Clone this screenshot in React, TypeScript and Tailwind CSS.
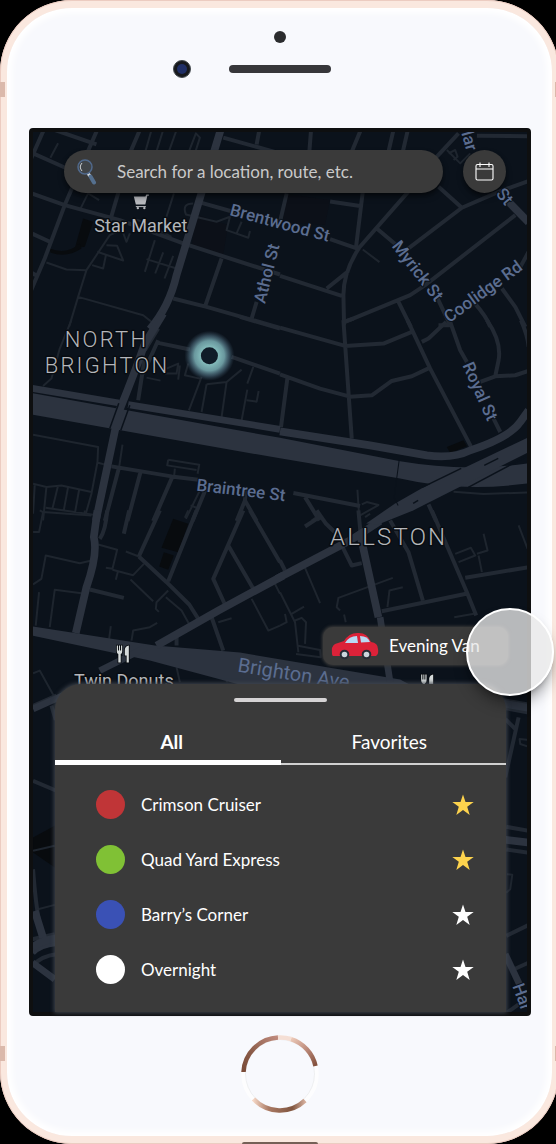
import React from "react";

type Tile = { x: number; y: number; wide: string[]; main: string[]; minor: string[]; thin: string[]; dark?: string[] };

// Roads are drawn in sheets at three times the map's scale; x and y give each sheet's origin.
const tiles: Tile[] = [
  {
    x: 30, y: 125,
    wide: ["M572 15L440 450Q418 545 360 612"],
    main: [],
    minor: [
      "M42 15L0 110", "M202 15L105 240L45 400L0 505", "M75 15L200 58", "M10 85L115 132", "M0 203L105 240L270 285L460 355L750 448",
      "M330 15L300 85L240 290", "M497 228L620 263", "M430 520L530 545L750 608", "M575 400L525 545", "M580 38L750 85", "M688 15L680 58",
      "M0 322L60 350", "M0 440L22 452", "M680 530L665 580",
    ],
    thin: [
      "M85 55L62 98", "M365 15L345 85", "M400 15L378 85", "M440 15L415 85", "M475 85L498 25L510 38L495 85", "M150 255L175 205L208 225",
      "M50 412L110 433L170 435", "M285 310L240 330L170 435L145 515L118 605", "M145 515L340 570L378 600", "M275 310L290 350L300 325",
      "M230 360L262 362L280 406L202 380M228 392L220 430L187 420", "M375 345L345 440M350 402L440 430M400 382L376 445M430 392L404 460",
      "M432 205L405 290", "M490 235Q455 235 468 268L560 290L600 275L590 315L655 338L660 318M635 290L620 325",
      "M305 280L340 290L425 335",
    ],
    dark: ["M160 280L190 290L165 365L135 370Z", "M60 370Q110 390 150 355L155 370Q110 400 62 382Z"],
  },
  {
    x: 280, y: 125,
    wide: ["M680 225L745 292"],
    main: [],
    minor: [
      "M93 15L88 80", "M242 15L215 80", "M340 15L325 80", "M383 15L368 80", "M590 32L745 34", "M535 25L470 95L380 205L237 368Q190 440 190 510L192 600",
      "M475 185L545 248", "M745 168L660 198L545 248L385 370", "M290 310L355 365", "M705 270L435 480L390 510L195 590", "M150 229L240 243",
      "M248 200L228 365", "M150 342L230 370", "M0 452L185 512", "M205 438L140 490", "M355 530L392 605", "M470 515L510 600L475 600",
      "M745 380L715 435M665 490L705 545L735 605", "M580 530Q620 575 630 605", "M20 205L0 290",
    ],
    thin: ["M248 373L298 411", "M500 75L540 115L570 85", "M505 85L525 75L532 95L520 105"],
  },
  {
    x: 30, y: 320,
    wide: ["M400 -20L345 70Q312 165 268 272L198 602"],
    main: ["M0 203L268 248M295 253L750 327"],
    minor: [
      "M385 25L345 90", "M385 68L480 88", "M345 110L325 240", "M340 160L385 60", "M605 110L750 160", "M630 -10L750 25",
      "M245 438L425 468L505 478", "M332 455L293 602", "M268 440L225 602", "M428 468L370 602", "M530 500L488 602", "M645 540L620 602M645 540L680 602M645 540L648 500",
    ],
    thin: [
      "M125 0L90 85L65 175L40 197", "M410 145L445 130L440 160L405 160M450 135L445 178M475 130L465 165L510 175", "M350 172L392 181",
      "M515 170L477 270", "M530 192L515 275M590 185L575 290M530 192L590 185L635 148", "M670 140L652 190M652 208L635 300M650 240L680 244L686 212",
      "M10 343L205 380L203 425L185 520L168 580", "M278 373L268 440M205 427L245 438", "M415 418L508 433L503 460M415 418L412 435L500 449M435 445L433 465",
      "M10 490L50 500L95 495L185 515M50 500L40 600M85 495L68 565M115 500L102 570M148 508L136 575M48 562L190 583M15 495L10 580",
      "M515 500L468 595M482 555L500 562",
    ],
  },
  {
    x: 280, y: 320,
    wide: ["M0 333L270 375L440 405Q520 415 570 390Q690 350 720 305L745 270"],
    main: [],
    minor: [
      "M190 0L215 355", "M190 5L220 -5", "M0 22L195 77L310 70L395 35", "M0 162L120 205L210 229L275 225L335 182L395 168L448 143", "M382 0L450 145L572 378",
      "M425 65L445 55L498 5", "M510 5L540 90L560 125", "M640 295L660 335", "M620 0Q665 65 655 120L645 168", "M600 185L645 168L705 165L745 152",
      "M722 0Q742 45 745 80", "M22 175L3 320", "M40 518L240 557", "M75 530L118 600", "M445 552L468 602",
    ],
    thin: ["M232 508L238 600", "M245 552L260 545L295 554L240 585", "M520 514L610 521L745 516", "M95 600L115 585"],
    dark: ["M500 380L550 360L560 378L510 398Z"],
  },
  {
    x: 30, y: 510,
    wide: ["M203 0L192 80Q205 130 170 230L138 368", "M380 405L565 300L760 195"],
    main: ["M210 480L350 410"],
    minor: [
      "M232 0Q228 60 210 85", "M298 0L282 70", "M390 0L327 138", "M327 138L410 215L478 282L507 328", "M500 0L415 212", "M640 0L550 205L585 282M595 105L670 235",
      "M660 0L750 155", "M180 237L282 262", "M0 590L80 555", "M545 320L580 420", "M440 370V405",
    ],
    thin: [
      "M30 0L40 5L28 65L10 65M40 5L185 15M165 0V12", "M10 222L35 205L48 135L150 158L185 150", "M60 350L75 238L155 248M28 245L18 345",
      "M205 102L262 118L248 175L228 172M248 178L310 194L342 160M265 180L258 208M288 123L327 138M302 207L370 272",
      "M415 240L380 275L378 295L387 304M408 260L455 300L480 345", "M305 390L310 360L360 350L382 337M243 347L238 385",
      "M565 335L605 323", "M665 265L715 360L750 345M735 220L750 250", "M475 0L465 22", "M10 488L30 480L72 555", "M440 470L450 515", "M600 475L590 515",
    ],
    dark: ["M430 25L475 40L445 125L395 112Z", "M402 125L432 135L415 178L388 168Z"],
  },
  {
    x: 280, y: 510,
    wide: ["M-10 205L210 90L300 32", "M240 70L295 320"],
    main: ["M300 320L330 515"],
    minor: [
      "M235 0L242 75", "M110 0L138 40L190 90", "M75 48L118 20", "M330 30L385 125L428 270", "M455 0L560 245L588 315", "M305 302L565 248M555 202L745 170",
      "M0 150L15 180", "M185 105L215 165L245 158",
    ],
    thin: [
      "M270 10L255 20", "M75 172L120 278", "M338 202L175 262L170 290L180 300M192 312L197 335", "M322 290L328 240L368 230",
      "M522 320L590 308", "M525 130L572 112L585 135L535 155M595 135L605 185M610 70L622 120L590 130", "M715 45L742 115",
      "M0 245L45 335L55 425M45 330L65 322L78 335L75 400M50 405L120 418L122 440L48 430M35 310L72 288M0 345L20 335L15 310",
    ],
  },
  {
    x: 0, y: 690,
    wide: [],
    main: ["M100 55L200 10"],
    minor: ["M100 270L170 300", "M100 535Q108 640 118 690", "M155 45L168 88"],
    thin: ["M100 480L165 465", "M115 655L165 642"],
    dark: ["M100 440L165 405V530L100 485Z"],
  },
  {
    x: 280, y: 690,
    wide: ["M660 37L760 54", "M660 445L760 457"],
    main: [],
    minor: ["M715 80L675 260", "M675 85L705 115", "M678 408L745 420", "M678 476L745 486", "M660 27L760 44", "M660 50L760 68"],
    thin: ["M745 148L718 145L720 160L745 168", "M680 550L696 552L690 595L678 606"],
  },
  {
    x: 0, y: 910,
    wide: ["M105 0L130 80", "M98 110Q120 90 170 82"],
    main: ["M98 125Q120 100 170 95", "M98 155L165 205"],
    minor: ["M98 165Q125 135 170 130", "M98 85L165 70"],
    thin: [],
  },
  {
    x: 280, y: 910,
    wide: [],
    main: ["M675 130L720 225"],
    minor: ["M678 75L745 42", "M690 180L745 155", "M680 305L715 280"],
    thin: [],
  },
];

const streets = [
  { name: "Brentwood St", x: 229, y: 215, turn: 15 },
  { name: "Athol St", x: 265, y: 304, turn: -76 },
  { name: "Myrick St", x: 391, y: 246, turn: 52 },
  { name: "Coolidge Rd", x: 449, y: 323, turn: -36 },
  { name: "Royal St", x: 462, y: 365, turn: 66 },
  { name: "Braintree St", x: 196, y: 490, turn: 7 },
  { name: "lar", x: 461, y: 133, turn: 74 },
  { name: "St", x: 495, y: 194, turn: 50 },
  { name: "Har", x: 512, y: 985, turn: 70 },
];

const routes = [
  { name: "Crimson Cruiser", dot: "bg-[#c03537]", favorite: true },
  { name: "Quad Yard Express", dot: "bg-[#80c135]", favorite: true },
  { name: "Barry’s Corner", dot: "bg-[#3a51b5]", favorite: false },
  { name: "Overnight", dot: "bg-white", favorite: false },
];

function Fork({ x, y }: { x: number; y: number }) {
  return (
    <g transform={`translate(${x} ${y})`} stroke="#05080c" strokeWidth="1.5" paintOrder="stroke" fill="#d5dada">
      <path d="M0 0h1.2v5h1V0h1v5h1V0h1.2v6q0 2-1.5 2.5V17H1.500V8.500Q0 8 0 6Z" />
      <path d="M12 0v17h-2.200v-7H8V4Q8.500 .5 12 0Z" />
    </g>
  );
}

function CityMap() {
  return (
    <svg className="absolute inset-0 h-full w-full" viewBox="33 132 494 879" preserveAspectRatio="xMidYMid slice" role="img" aria-label="Map of Allston and North Brighton">
      <rect x="-200" y="-200" width="1000" height="1600" fill="#0b121b" />
      <path d="M195 214L228 225L223 257L192 245ZM287 194L330 200L325 225L282 222Z" fill="#0c1018" />
      {tiles.map((t) => (
        <g key={`${t.x}-${t.y}`} transform={`translate(${t.x} ${t.y}) scale(.33333)`} fill="none" strokeLinejoin="round">
          {t.dark?.map((d) => <path key={d} d={d} fill="#080b0e" />)}
          <path d={t.thin.join("")} stroke="#1e252e" strokeWidth="6" />
          <path d={t.minor.join("")} stroke="#222933" strokeWidth="12" />
        </g>
      ))}
      <g fill="#2c333f">
        <path d="M33 393L280 437.500L400 461Q465 472 528 463V483Q460 492 400 478L280 458L33 414.500Z" />
        <path d="M33 626L155 645L240 652L400 679L440 700H300L150 660L33 635Z" />
      </g>
      {tiles.map((t) => (
        <g key={`${t.x}-${t.y}`} transform={`translate(${t.x} ${t.y}) scale(.33333)`} fill="none" stroke="#2c333f">
          <path d={t.main.join("")} strokeWidth="20" />
          <path d={t.wide.join("")} strokeWidth="23" />
        </g>
      ))}
      <path d="M366 523L395 503L423 487L528 437V452L413 510L378 524Z" fill="#2c333f" />
      <g fill="none" stroke="#0b121b" strokeWidth="1.500">
        <path d="M119 403L110 428M130 405L121 430" />
        <path d="M422 487L461 468M468 487L528 455M484 465L498 458M413 503L418 500" />
        <path d="M399 460L394 497L398 505" strokeWidth="1" />
      </g>

      <g fill="#5b6d90" stroke="#0b121b" strokeWidth="2" strokeLinejoin="round" paintOrder="stroke" className="font-['Roboto',sans-serif] text-[17px] font-medium">
        {streets.map((s) => (
          <text key={s.name + s.x} transform={`translate(${s.x} ${s.y}) rotate(${s.turn})`}>{s.name}</text>
        ))}
        <text transform="translate(237 671) rotate(9)" stroke="#2c333f" className="text-[20px] font-normal">Brighton Ave</text>
      </g>
      <g fill="#b4b6ba" stroke="#080c11" strokeWidth="3" strokeLinejoin="round" paintOrder="stroke" className="font-['Roboto',sans-serif] text-[18px]">
        <text x="141" y="232" textAnchor="middle">Star Market</text>
        <text x="124" y="686" textAnchor="middle">Twin Donuts</text>
        <g className="text-[22px] font-light tracking-widest">
          <text x="65" y="347">NORTH</text>
          <text x="45" y="373">BRIGHTON</text>
          <text x="330" y="545" className="text-[24px]">ALLSTON</text>
        </g>
      </g>
      <g fill="#b7b9be">
        <path d="M134 196.500h11.500l1-2h2.500v1.200h-1.500l-2 8.800h-9.500Z" />
        <path d="M136 206h10v1h-10z" />
        <circle cx="138" cy="208" r="1.200" />
        <circle cx="144.500" cy="208" r="1.200" />
      </g>
      <Fork x={117} y={645} />
      <Fork x={421} y={674} />
      <defs>
        <radialGradient id="halo">
          <stop offset=".35" stopColor="#82b9b9" />
          <stop offset=".6" stopColor="#6f9fa5" stopOpacity=".95" />
          <stop offset=".8" stopColor="#55788a" stopOpacity=".55" />
          <stop offset="1" stopColor="#40586c" stopOpacity="0" />
        </radialGradient>
      </defs>
      <circle cx="209.500" cy="355.500" r="25" fill="url(#halo)" />
      <circle cx="209.500" cy="355.500" r="8.500" fill="#101c28" />
    </svg>
  );
}

function Magnifier() {
  return (
    <svg viewBox="0 0 20 26" className="h-[26px] w-5 shrink-0" aria-hidden="true">
      <path d="M11 14.500L13 17" stroke="#d8dde2" strokeWidth="3" />
      <path d="M13.500 17.500L17 23.500" stroke="#55708f" strokeWidth="4" strokeLinecap="round" />
      <circle cx="8" cy="8" r="7" fill="#404448" stroke="#50698c" strokeWidth="1.500" />
      <path d="M5 12Q1.500 8 5 4" fill="none" stroke="#c9cdd0" strokeWidth="1" />
    </svg>
  );
}

function CalendarIcon() {
  return (
    <svg viewBox="0 0 20 20" className="size-5" fill="none" stroke="#fff" strokeWidth="1.100" aria-hidden="true">
      <rect x="1" y="2.500" width="17" height="15.500" rx="1.500" />
      <path d="M1 7h17M5 .5v4.500M14 .5v4.500" />
    </svg>
  );
}

function Car() {
  return (
    <svg viewBox="0 0 48 28" className="h-7 w-12 shrink-0" aria-hidden="true">
      <path d="M1 22Q0 14 4 12L13 9Q18 1 26 1Q36 0 40 10Q47 11 47 17Q48 22 45 24H3Q1 24.500 1 22Z" fill="#dc2239" />
      <path d="M14 11Q18 4 26 4L27 11Z" fill="#b9daf5" />
      <path d="M29 4Q37 4 39 10L30 10.500Z" fill="#b9daf5" />
      <circle cx="13.500" cy="22.500" r="4.800" fill="#282c36" />
      <circle cx="35.500" cy="22.500" r="4.800" fill="#282c36" />
      <circle cx="13.500" cy="22.500" r="2.800" fill="#ccd6de" />
      <circle cx="35.500" cy="22.500" r="2.800" fill="#ccd6de" />
    </svg>
  );
}

function Star({ className }: { className: string }) {
  return (
    <svg viewBox="0 0 22 22" className={`size-[22px] ${className}`} fill="currentColor" aria-hidden="true">
      <path d="M11 0.500L13.500 8H21.700L15.200 12.800L17.700 21L11 16L4.300 21L6.800 12.800L0.300 8H8.500Z" />
    </svg>
  );
}

function HomeButton() {
  return (
    <button type="button" aria-label="Home" className="size-[78px] rounded-full">
      <svg viewBox="0 0 78 78" className="size-full" fill="none" strokeWidth="4.500">
        <defs>
          <linearGradient id="ringA" x1="0" y1="1" x2="1" y2="0"><stop stopColor="#7a4b38" /><stop offset=".4" stopColor="#8a5b48" /><stop offset="1" stopColor="#c08b7d" /></linearGradient>
          <linearGradient id="ringB" x1="0" y1="0" x2="1" y2="1"><stop stopColor="#ecc9b8" /><stop offset=".5" stopColor="#bd8b7b" /><stop offset="1" stopColor="#824f3b" /></linearGradient>
          <linearGradient id="ringC"><stop stopColor="#f4d6c5" /><stop offset=".3" stopColor="#a97963" /><stop offset=".75" stopColor="#80553f" /><stop offset="1" stopColor="#d5ae9c" /></linearGradient>
        </defs>
        <circle cx="39" cy="39" r="36.500" stroke="#fdfdfe" />
        <circle cx="39" cy="39" r="34.500" stroke="#e4e5e8" strokeWidth=".6" />
        <path d="M2.500 37A36.500 36.500 0 0 1 37 2.500" stroke="url(#ringA)" />
        <path d="M37 2.500A36.500 36.500 0 0 1 50 4" stroke="#f5dfd5" />
        <path d="M50 4.200A36.500 36.500 0 0 1 74.500 31" stroke="url(#ringB)" />
        <path d="M64 65.500A36.500 36.500 0 0 1 12.500 64" stroke="url(#ringC)" />
      </svg>
    </button>
  );
}

export default function App() {
  return (
    <div className="flex min-h-screen flex-col overflow-x-hidden bg-black font-['Lato',sans-serif]">
      <div className="relative -mr-[3px] flex grow flex-col rounded-[72px] border-x-[7px] border-y-8 border-[#fae8df] bg-[#f8f9fd] shadow-[inset_0_0_6px_5px_#ffffff]">
        <span className="absolute -inset-x-[7px] -inset-y-2 rounded-[72px] border border-[#ecccc1]" aria-hidden="true" />
        <span className="absolute -left-[7px] top-[74px] h-[15px] w-[5px] bg-[#dbb9ab]" aria-hidden="true" />
        <span className="absolute -left-[7px] bottom-[75px] h-[15px] w-[5px] bg-[#dbb9ab]" aria-hidden="true" />
        <span className="absolute -right-[7px] top-[74px] h-[15px] w-1 bg-[#dbb9ab]" aria-hidden="true" />
        <span className="absolute -right-[7px] bottom-[75px] h-[15px] w-1 bg-[#dbb9ab]" aria-hidden="true" />
        <span className="absolute -bottom-2 left-1/2 h-0.5 w-[76px] -translate-x-1/2 rounded-t bg-[#756056]" aria-hidden="true" />

        <div className="flex h-[120px] shrink-0 flex-col items-center gap-[17px] pt-[23px]" aria-hidden="true">
          <span className="size-3 rounded-full bg-[#2b2c2e]" />
          <div className="grid w-full grid-cols-[1fr_auto_1fr] items-center">
            <span className="mr-[38px] flex size-[18px] items-center justify-center justify-self-end rounded-full border border-[#454b50] bg-[#17191d]">
              <span className="size-2.5 rounded-full bg-[#202f66]" />
            </span>
            <span className="h-2 w-[102px] rounded-full bg-[#37373a]" />
          </div>
        </div>

        <main className="relative ml-[22px] mr-[21px] flex grow flex-col rounded-[4px] border-4 border-[#0e0f10]">
          <div className="absolute inset-0 overflow-hidden"><CityMap /></div>

          <form role="search" className="relative ml-[31px] mr-[21px] mt-[18px] flex gap-5" onSubmit={(e) => e.preventDefault()}>
            <label className="flex h-[43px] min-w-0 grow items-center gap-5 rounded-full bg-[#3a3a3a] pl-[13px] pr-4 shadow-md shadow-black/50">
              <Magnifier />
              <input type="search" aria-label="Search" placeholder="Search for a location, route, etc." className="min-w-0 grow bg-transparent text-[17px] leading-6 text-white outline-none placeholder:text-[#c9c9c9]" />
            </label>
            <button type="button" aria-label="Schedule" className="flex size-[43px] shrink-0 items-center justify-center rounded-full bg-[#3a3a3a] shadow-md shadow-black/50">
              <CalendarIcon />
            </button>
          </form>

          <button type="button" className="relative z-10 mb-[19px] mr-[19px] mt-auto flex h-[38px] w-[185px] items-center gap-2.5 self-end rounded-[10px] bg-[#3a3a3a] pl-2 text-[17px] text-white shadow-[0_0_3px_1px_#3a3a3a]">
            <Car />
            <span className="whitespace-nowrap">Evening Van</span>
            <span className="absolute -right-[46px] -top-[19px] size-[88px] rounded-full border-2 border-white bg-[#e8e8e8]/78 shadow-lg shadow-black/40" aria-hidden="true" />
          </button>

          <section className="relative ml-[22px] mr-[21px] rounded-t-[26px] bg-[#3a3a3a] text-white shadow-[0_0_4px_1px_#3f454e]">
            <div className="flex justify-center pt-3.5">
              <span className="h-1 w-[93px] rounded-full bg-[#d5d3d4]" />
            </div>
            <div role="tablist" className="mt-[22px] grid grid-cols-2 text-[19px] leading-9">
              <button type="button" role="tab" aria-selected="true" className="border-b-[5px] border-white font-bold">
                <span className="pl-2">All</span>
              </button>
              <button type="button" role="tab" aria-selected="false" className="border-b-2 border-[#d0d0d0] pb-[3px]">
                <span className="pr-2">Favorites</span>
              </button>
            </div>
            <ul className="pb-[15px] pl-[41px] pr-8 pt-3">
              {routes.map((r) => (
                <li key={r.name} className="flex h-[55px] items-center gap-4">
                  <span className={`size-[29px] rounded-full ${r.dot}`} />
                  <span className="grow text-[17px] leading-6">{r.name}</span>
                  <button type="button" aria-pressed={r.favorite} aria-label={`Favorite ${r.name}`}>
                    <Star className={r.favorite ? "text-[#fdd34d]" : "text-white"} />
                  </button>
                </li>
              ))}
            </ul>
          </section>
        </main>

        <footer className="flex h-[120px] shrink-0 justify-center pt-[19px]"><HomeButton /></footer>
      </div>
    </div>
  );
}
